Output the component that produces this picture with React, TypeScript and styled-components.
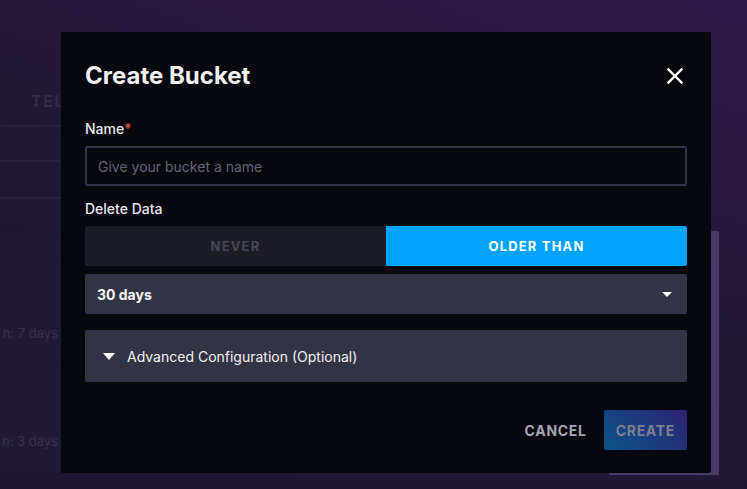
import React from "react";
import styled, { createGlobalStyle } from "styled-components";

const GlobalStyle = createGlobalStyle`
  html, body {
    margin: 0;
    padding: 0;
    height: 100%;
    overflow: hidden;
  }
  body {
    font-family: Inter, Roboto, "Liberation Sans", sans-serif;
    background: linear-gradient(200deg, #301848 0%, #221838 45%, #1d1630 100%);
  }
`;

const Screen = styled.div`
  position: relative;
  width: 747px;
  height: 489px;
  overflow: hidden;
`;

/* ---------- dimmed page behind the overlay ---------- */

const BgPage = styled.div`
  display: grid;
  grid-template-columns: 1fr 110px 28px;
  height: 100%;
`;

const BgMain = styled.div`
  display: flex;
  flex-direction: column;
  padding-top: 91px;
`;

const BgTab = styled.div`
  padding-left: 31px;
  height: 34px;
  font-size: 16px;
  font-weight: 700;
  letter-spacing: 0.1em;
  color: #342b48;
  white-space: nowrap;
`;

const BgRow = styled.div<{ $h: number }>`
  height: ${(p) => p.$h}px;
  border-top: 2px solid #2a2141;
  box-sizing: border-box;
`;

const BgCard = styled.div`
  display: flex;
  flex-direction: column;
  background: #211a36;
`;

const BgCardRow = styled.div<{ $h: number; $pb?: number }>`
  height: ${(p) => p.$h}px;
  border-top: 1px solid #1e1730;
  box-sizing: border-box;
  display: flex;
  align-items: flex-end;
  padding-bottom: ${(p) => p.$pb ?? 0}px;
`;

const BgText = styled.span`
  width: 58px;
  text-align: right;
  font-size: 13px;
  line-height: 18px;
  color: #3a3150;
  white-space: nowrap;
`;

const BgSide = styled.div`
  margin-top: 231px;
  height: 244px;
  background: #4b3a69;
`;

/* ---------- overlay + dialog ---------- */

const Overlay = styled.div`
  position: absolute;
  inset: 0;
  padding: 32px 0 0 61px;
`;

const Dialog = styled.div`
  width: 650px;
  height: 441px;
  box-sizing: border-box;
  background: #07080d;
  border-radius: 2px;
  padding: 28px 24px 23px;
  display: flex;
  flex-direction: column;
`;

const Header = styled.div`
  display: flex;
  align-items: center;
  justify-content: space-between;
  height: 32px;
`;

const Title = styled.h2`
  margin: 0;
  font-size: 24px;
  font-weight: 700;
  color: #f1f1f3;
  line-height: 32px;
`;

const CloseButton = styled.button`
  width: 24px;
  height: 24px;
  border: 0;
  padding: 0;
  background: transparent;
  display: flex;
  align-items: center;
  justify-content: center;
  cursor: pointer;
`;

const Label = styled.div<{ $top: number }>`
  margin-top: ${(p) => p.$top}px;
  margin-bottom: 7px;
  font-size: 14px;
  font-weight: 500;
  line-height: 20px;
  color: #e7e7ed;
`;

const Required = styled.span`
  color: #dc4e58;
`;

const Input = styled.input`
  height: 40px;
  box-sizing: border-box;
  border: 2px solid #333346;
  border-radius: 2px;
  background: transparent;
  padding: 0 11px;
  font-family: inherit;
  font-size: 14px;
  color: #f1f1f3;
  outline: none;
  &::placeholder {
    color: #656577;
  }
`;

const Toggle = styled.div`
  display: grid;
  grid-template-columns: 1fr 1fr;
  height: 40px;
`;

const ToggleOption = styled.button<{ $active?: boolean }>`
  border: 0;
  margin: 0;
  font-family: inherit;
  font-size: 13px;
  font-weight: 700;
  letter-spacing: 0.09em;
  text-transform: uppercase;
  background: ${(p) => (p.$active ? "#00a3ff" : "#1c1c27")};
  color: ${(p) => (p.$active ? "#ffffff" : "#474759")};
  &:first-child {
    border-radius: 2px 0 0 2px;
  }
  &:last-child {
    border-radius: 0 2px 2px 0;
  }
`;

const Dropdown = styled.button`
  margin-top: 8px;
  height: 40px;
  border: 0;
  border-radius: 2px;
  background: #333346;
  padding: 0 15px 0 12px;
  display: flex;
  align-items: center;
  justify-content: space-between;
  font-family: inherit;
  font-size: 14px;
  font-weight: 700;
  color: #f5f5f7;
`;

const Expander = styled.div`
  margin-top: 16px;
  height: 52px;
  border-radius: 2px;
  background: #333346;
  padding-left: 18px;
  display: flex;
  align-items: center;
  gap: 12px;
  font-size: 14px;
  color: #f1f1f3;
`;

const Footer = styled.div`
  margin-top: auto;
  display: flex;
  justify-content: flex-end;
  align-items: center;
  gap: 5px;
`;

const FooterButton = styled.button<{ $primary?: boolean }>`
  height: 40px;
  border: 0;
  border-radius: 2px;
  padding: 0 12px;
  font-family: inherit;
  font-size: 14px;
  font-weight: 700;
  letter-spacing: 0.05em;
  text-transform: uppercase;
  background: ${(p) =>
    p.$primary ? "linear-gradient(45deg, #0b548c 0%, #2c2272 100%)" : "transparent"};
  color: ${(p) => (p.$primary ? "#7f7f8f" : "#a5a5b5")};
`;

const CloseIcon = () => (
  <svg width="16" height="16" viewBox="0 0 16 16">
    <path d="M1.5 1.5 L14.5 14.5 M14.5 1.5 L1.5 14.5" stroke="#ffffff" strokeWidth="2.4" strokeLinecap="square" />
  </svg>
);

const Caret = ({ w, h }: { w: number; h: number }) => (
  <svg width={w} height={h} viewBox={`0 0 ${w} ${h}`}>
    <polygon points={`0,0 ${w},0 ${w / 2},${h}`} fill="#ffffff" />
  </svg>
);

export default function App() {
  return (
    <>
      <GlobalStyle />
      <Screen>
        <BgPage>
          <BgMain>
            <BgTab>TELEGRAF</BgTab>
            <BgRow $h={35} />
            <BgRow $h={37} />
            <BgRow $h={35} />
            <BgCard>
              <BgCardRow $h={28} />
              <BgCardRow $h={107} $pb={25}>
                <BgText>n: 7 days</BgText>
              </BgCardRow>
              <BgCardRow $h={105} $pb={22}>
                <BgText>n: 3 days</BgText>
              </BgCardRow>
            </BgCard>
          </BgMain>
          <BgSide />
          <div />
        </BgPage>

        <Overlay>
          <Dialog>
            <Header>
              <Title>Create Bucket</Title>
              <CloseButton aria-label="Close">
                <CloseIcon />
              </CloseButton>
            </Header>

            <Label $top={27}>
              Name<Required>*</Required>
            </Label>
            <Input placeholder="Give your bucket a name" />

            <Label $top={13}>Delete Data</Label>
            <Toggle>
              <ToggleOption>Never</ToggleOption>
              <ToggleOption $active>Older Than</ToggleOption>
            </Toggle>

            <Dropdown>
              <span>30 days</span>
              <Caret w={10} h={5} />
            </Dropdown>

            <Expander>
              <Caret w={12} h={7} />
              <span>Advanced Configuration (Optional)</span>
            </Expander>

            <Footer>
              <FooterButton>Cancel</FooterButton>
              <FooterButton $primary>Create</FooterButton>
            </Footer>
          </Dialog>
        </Overlay>
      </Screen>
    </>
  );
}
